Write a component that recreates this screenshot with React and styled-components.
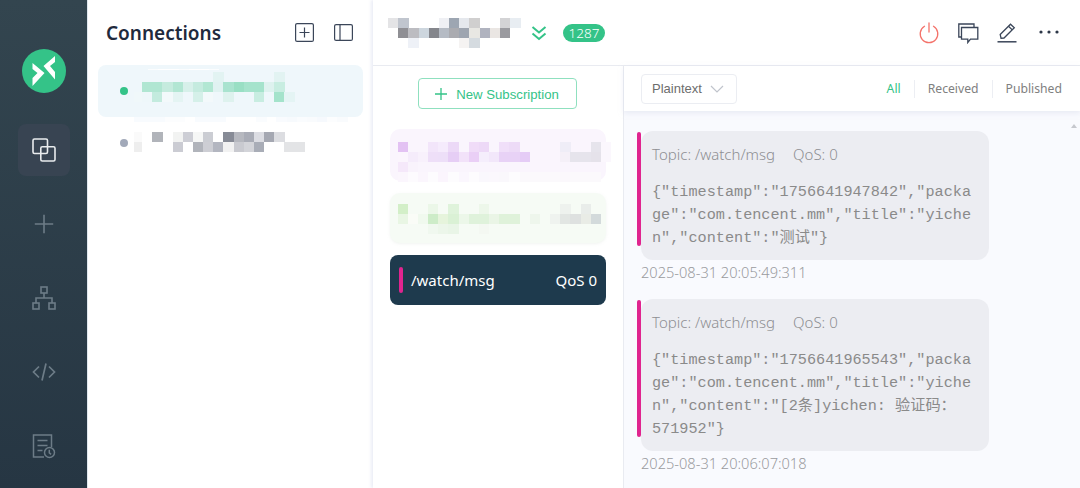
import React from "react";
import styled, { createGlobalStyle } from "styled-components";

const GREEN = "#34c388";
const PINK = "#e0248f";
const CELL = 10.17;

const Global = createGlobalStyle`
  html, body { margin: 0; padding: 0; width: 1080px; height: 488px; overflow: hidden; background: #fff; }
  * { box-sizing: border-box; }
  body { font-family: "Noto Sans", "Noto Sans CJK SC", sans-serif; }
`;

const Shell = styled.div`
  display: flex;
  width: 1080px;
  height: 488px;
  overflow: hidden;
`;

const Rail = styled.nav`
  width: 88px;
  flex: none;
  display: flex;
  flex-direction: column;
  align-items: center;
  padding: 49px 0 0 1px;
  background: linear-gradient(180deg, #33454f 0%, #263643 100%);
  border-right: 1px solid #dfe7ee;
`;

const Logo = styled.svg`
  display: block;
  flex: none;
  width: 44px;
  height: 44px;
  margin-bottom: 31px;
`;

const RailItem = styled.div`
  width: 52px;
  height: 52px;
  flex: none;
  display: flex;
  align-items: center;
  justify-content: center;
  margin-bottom: 22px;
  border-radius: 8px;
  background: ${(p) => (p.$active ? "#384452" : "transparent")};
  color: ${(p) => (p.$active ? "#e9ecee" : "#6d7c87")};
`;

const ListPanel = styled.aside`
  width: 285px;
  flex: none;
  padding: 0 10px 0 10px;
  background: #fff;
`;

const ListHeader = styled.header`
  height: 65px;
  display: flex;
  align-items: center;
  padding: 0 10px 0 8px;
`;

const ListTitle = styled.h1`
  margin: 0;
  flex: 1;
  font-size: 19px;
  font-weight: 600;
  color: #1f2a3d;
`;

const ListTools = styled.div`
  display: flex;
  align-items: center;
  gap: 20px;
  color: #3b4659;
`;

const ConnRow = styled.div`
  height: 52px;
  display: flex;
  align-items: center;
  padding-left: 22px;
  border-radius: 8px;
  background: ${(p) => (p.$active ? "#eff7fb" : "transparent")};
`;

const Dot = styled.span`
  width: 8px;
  height: 8px;
  flex: none;
  border-radius: 50%;
  background: ${(p) => (p.$on ? GREEN : "#a2a9b9")};
`;

const MosaicSvg = styled.svg`
  display: block;
  flex: none;
  overflow: visible;
  shape-rendering: crispEdges;
  margin-left: ${(p) => p.$ml || 0}px;
`;

const Main = styled.main`
  flex: 1;
  min-width: 0;
  display: flex;
  flex-direction: column;
  box-shadow: -2px 0 3px rgba(210, 216, 235, 0.45);
  position: relative;
`;

const TopBar = styled.header`
  height: 66px;
  flex: none;
  display: flex;
  align-items: center;
  padding: 0 19px 0 15px;
  border-bottom: 1px solid #e9ebf1;
  background: #fff;
`;

const DoubleChevron = styled.svg`
  display: block;
  margin-left: 13px;
  color: ${GREEN};
`;

const Badge = styled.span`
  margin-left: 16px;
  width: 42px;
  height: 18px;
  border-radius: 9px;
  background: ${GREEN};
  color: #fff;
  font-size: 13.5px;
  font-weight: 300;
  line-height: 18px;
  text-align: center;
`;

const TopTools = styled.div`
  margin-left: auto;
  display: flex;
  align-items: center;
  gap: 17px;
  color: #3b4659;
`;

const Body = styled.div`
  flex: 1;
  min-height: 0;
  display: flex;
`;

const SubsColumn = styled.section`
  width: 251px;
  flex: none;
  display: flex;
  flex-direction: column;
  padding: 12px 17px 0 17px;
  border-right: 1px solid #e9ebf1;
  background: #fff;
`;

const NewSub = styled.button`
  align-self: center;
  width: 159px;
  height: 31px;
  flex: none;
  display: flex;
  align-items: center;
  justify-content: center;
  gap: 9px;
  margin: 0 0 20px -2px;
  padding: 1px 0 0;
  border: 1px solid #8fe0bf;
  border-radius: 4px;
  background: #fff;
  color: ${GREEN};
  font-family: "Liberation Sans", sans-serif;
  font-size: 13.2px;
`;

const SubCard = styled.div`
  width: 216px;
  height: ${(p) => (p.$h ? p.$h : 50)}px;
  flex: none;
  display: flex;
  align-items: center;
  margin-bottom: 12px;
  padding: 0 9px;
  border-radius: ${(p) => (p.$dark ? 8 : 10)}px;
  background: ${(p) => p.$bg};
  color: #fff;
  font-size: 15px;
  box-shadow: ${(p) => (p.$shadow ? "0 1px 3px rgba(200,210,200,.25)" : "none")};
`;

const SubBar = styled.span`
  width: 4px;
  height: 26px;
  flex: none;
  margin-right: 8px;
  border-radius: 2px;
  background: ${PINK};
`;

const SubName = styled.span`
  flex: 1;
`;

const MessagesColumn = styled.section`
  flex: 1;
  min-width: 0;
  display: flex;
  flex-direction: column;
  background: #f9fafe;
  position: relative;
`;

const MsgToolbar = styled.div`
  height: 45px;
  flex: none;
  display: flex;
  align-items: center;
  padding: 0 18px 0 17px;
  background: #fff;
  box-shadow: 0 2px 5px rgba(215, 220, 235, 0.5);
`;

const Select = styled.div`
  width: 96px;
  height: 30px;
  display: flex;
  align-items: center;
  justify-content: space-between;
  padding: 0 12px 0 10px;
  border: 1px solid #ebedf2;
  border-radius: 4px;
  color: #6d6d6d;
  font-family: "Liberation Sans", sans-serif;
  font-size: 13px;
`;

const Tabs = styled.div`
  margin-left: auto;
  display: flex;
  align-items: center;
`;

const Tab = styled.span`
  font-size: 12.2px;
  line-height: 18px;
  color: ${(p) => (p.$active ? GREEN : "#808080")};
  padding-left: ${(p) => (p.$first ? 0 : 13)}px;
  margin-left: ${(p) => (p.$first ? 0 : 13)}px;
  border-left: ${(p) => (p.$first ? "none" : "1px solid #eceef3")};
`;

const ScrollArrow = styled.span`
  position: absolute;
  right: 3px;
  top: 58px;
  border-left: 3px solid transparent;
  border-right: 3px solid transparent;
  border-bottom: 4px solid #c6c8ce;
`;

const MsgList = styled.div`
  flex: 1;
  min-height: 0;
  padding: 20px 17px 0 17px;
  display: flex;
  flex-direction: column;
`;

const Message = styled.article`
  flex: none;
  margin-bottom: 16px;
`;

const Bubble = styled.div`
  position: relative;
  width: 348px;
  padding: 12px 11px 10px 11px;
  border-radius: 12px;
  background: #ecedf2;
  &::before {
    content: "";
    position: absolute;
    left: -4px;
    top: 1px;
    bottom: 14px;
    width: 4px;
    border-radius: 2px;
    background: ${PINK};
  }
`;

const Meta = styled.div`
  display: flex;
  gap: 18px;
  height: 22px;
  font-size: 15px;
  font-weight: 300;
  line-height: 22px;
  color: #8e8f93;
`;

const Payload = styled.pre`
  margin: 16px 0 0;
  font-family: "Liberation Mono", "Noto Sans CJK SC", monospace;
  font-size: 15.2px;
  line-height: 23px;
  color: #8a8a8a;
  white-space: pre-wrap;
  word-break: break-all;
`;

const Time = styled.div`
  margin-top: 1px;
  height: 22px;
  font-size: 14.6px;
  font-weight: 300;
  line-height: 22px;
  color: #9a9b9f;
`;

function Mosaic({ width, height, ml, rows }) {
  return (
    <MosaicSvg width={width} height={height} viewBox={`0 0 ${width} ${height}`} $ml={ml}>
      {rows.flatMap((r, ri) =>
        r.cells.map((c, i) =>
          c ? <rect key={`${ri}-${i}`} x={r.x + i * CELL} y={r.y} width={r.w || CELL + 0.3} height={r.h || 10} fill={c} /> : null
        )
      )}
    </MosaicSvg>
  );
}

const _ = null;

const conn1 = [
  { x: 14, y: 4, h: 1, cells: ["#fbfdfe", "#ffffff", "#ffffff", "#fbfdfe", "#ffffff", "#ffffff", "#fbfdfe"] },
  { x: 8, y: 7, cells: [_, _, _, _, _, _, _, "#e2f3f2", _, _, _, _, _, "#e2f3f2"] },
  { x: 8, y: 17, cells: ["#b0e6d2", "#b0e6d2", "#c5ebde", "#b2e6d3", "#d7f0ea", "#c5ebdf", "#b2e7d3", "#e0f2f1", "#a9e3cf", "#99dfc4", "#a5e3cc", "#a5e3cc", "#def2ef", "#c8ede1"] },
  { x: 0, y: 27, w: 8, cells: ["#f0f8fa"] },
  { x: 8, y: 27, cells: ["#eef7fa", "#c3ebde", "#f3f9fb", "#e4f4f3", _, "#d5f0e9", "#f3f9fb", _, "#def2ee", _, _, "#c8ede1", _, "#a4e3cb", "#e4f4f4"] },
  { x: 0, y: 52, h: 5, cells: ["#f8fbfe", "#f8fbfe", "#f8fbfe", "#fcfdfe", "#fcfdfe", _, "#f8fbfe", "#f8fbfe", "#f8fbfe", _, _, _, "#fafcfe", _, "#f9fbfe", "#f7fafd", "#fafcfe", "#f9fbfd", "#f6f9fd", "#fcfdfe", "#f9fbfd"] },
];

const conn2 = [
  { x: 0, y: 15, w: 8, cells: ["#fafafa"] },
  { x: 8, y: 15, cells: [_, "#b1b4ba", _, "#f2f3f2", "#cdced5", "#f6f7f6", "#cbcdd3", _, "#878b96", "#b6b8bf", "#a9acb6", "#dcdde3", "#a5a8b2", "#dcdde1"] },
  { x: 0, y: 25, w: 8, cells: ["#eeeeee"] },
  { x: 8, y: 25, cells: [_, _, _, "#cbccd3", _, "#b1b4bb", "#cdced4", "#b3b6c0", "#f2f2f2", "#c9cad0", "#d3d4d9", "#a9adb7", _, _, "#e3e4e6", "#e3e4e6"] },
];

const title = [
  { x: 0, y: 0, cells: ["#e4e4e6", "#c0c5ce", _, _, _, "#eff0f4", "#9da6b2", "#e5e8ed", "#d0cfcf", _, _, "#d3d3d5", "#e8edf2"] },
  { x: 0, y: 10, cells: [_, "#8f8f94", "#bcbcc1", "#cdd6de", "#84868c", "#b5bbc4", "#aaabb0", "#9ea5b0", "#e8e7e3", "#b0b3bf", "#eae6e3", "#9a9a9f"] },
  { x: 0, y: 20, cells: [_, _, "#eef1f7", _, _, _, _, "#f5f3f2", "#d5dbe0"] },
];

const sub1 = [
  { x: -1.5, y: 13, cells: ["#e3c2f3", _, _, "#f2e5fa", "#f5ebfc", "#ecd9f7", _, "#f0dcf8", "#edd9f7", _, "#f0dff9", "#eddbf7", _, _, _, _, "#efedf7", _, _, "#e6e4ec", "#fbf7fd"] },
  { x: -1.5, y: 23, cells: ["#fbf5fd", "#f5ecfb", "#f8f1fc", "#eedff8", "#eddff8", "#e6cef5", "#f2e2f9", "#eacff6", "#f5eefc", "#f2e7fa", "#e8d2f6", "#e8d2f6", "#e5ccf6", _, _, _, "#f5f0f8", "#e6e4ec", "#e6e4ec", "#e5e2ea", "#fbf7fd"] },
  { x: -1.5, y: 33, cells: ["#f5e8fa", "#f9f3fc"] },
  { x: -1.5, y: 43, cells: ["#fbf6fd", "#fdfbfe", "#fbf6fd", "#fdfcfe", "#fbf5fd", "#fdfcfe", "#fbf7fe", "#fdfcfe", "#faf8fd", "#fbf8fd", "#faf8fc", "#fdfcfe", "#fbf9fc", "#fbf9fc", "#fbf9fc", "#fbf9fc", "#fbf8fc", "#fbf9fc", "#fbf9fc", "#fbf9fc"] },
];

const sub2 = [
  { x: -1.5, y: 11, cells: ["#d3efc8", _, _, "#ebf7e8", _, "#dff3db", _, _, "#edf7ea", _, _, _, _, _, _, _, "#eef2ee", _, "#e9edea"] },
  { x: -1.5, y: 21, cells: ["#e9f6e4", "#fafcf7", "#f0f9ee", "#cdecc8", "#e6f4dc", "#daf1d5", "#ecf7e9", "#dff2db", "#dff2db", "#eaf5e6", "#dff2da", "#dff2da", _, "#eef6ec", _, "#eff3ef", "#e2e6e3", "#dee1e0", "#e9ece6", "#d3dadb"] },
  { x: -1.5, y: 31, cells: [_, _, _, "#f0f8ef", "#ecf6ea", "#e9f5e7", _, _, "#f4f8f2"] },
];

const RailCopy = () => (
  <svg width="24" height="24" viewBox="0 0 24 24" fill="none" stroke="currentColor" strokeWidth="1.6">
    <rect x="1" y="1" width="14.5" height="14.5" rx="1.5" />
    <rect x="8.8" y="8.8" width="14.2" height="14.2" rx="1.5" />
  </svg>
);
const RailPlus = () => (
  <svg width="20" height="20" viewBox="0 0 20 20" fill="none" stroke="currentColor" strokeWidth="1.6">
    <path d="M10 .8v18.4M.8 10h18.4" />
  </svg>
);
const RailTree = () => (
  <svg width="24" height="24" viewBox="0 0 24 24" fill="none" stroke="currentColor" strokeWidth="1.6">
    <rect x="9" y="1" width="6" height="6" />
    <rect x="1" y="17" width="6" height="6" />
    <rect x="17" y="17" width="6" height="6" />
    <path d="M12 7v5M4 17v-5h16v5" />
  </svg>
);
const RailCode = () => (
  <svg width="24" height="20" viewBox="0 0 24 20" fill="none" stroke="currentColor" strokeWidth="1.7">
    <path d="M7 4.5 1.5 10 7 15.5M17 4.5l5.500 5.500-5.500 5.500M14 1.500 10 18.500" />
  </svg>
);
const RailLog = () => (
  <svg width="24" height="25" viewBox="0 0 24 25" fill="none" stroke="currentColor" strokeWidth="1.5">
    <path d="M12 23H1.500V1H19.500V13" />
    <path d="M5.500 6.500h10M5.500 11.500h10M5.500 16.500h5" />
    <circle cx="17.500" cy="18.500" r="5" />
    <path d="M17.300 15.800v3l1.800 1.500" />
  </svg>
);

export default function App() {
  return (
    <Shell>
      <Global />
      <Rail>
        <Logo viewBox="0 0 44 44">
          <circle cx="22" cy="22" r="22" fill={GREEN} />
          <path fill="#fff" d="M33 7 21.500 17 33 30.500V23L28 17 33 13ZM10.500 14 22.500 24 10.500 37V29L15.500 24 10.500 20Z" />
        </Logo>
        <RailItem $active><RailCopy /></RailItem>
        <RailItem><RailPlus /></RailItem>
        <RailItem><RailTree /></RailItem>
        <RailItem><RailCode /></RailItem>
        <RailItem><RailLog /></RailItem>
      </Rail>
      <ListPanel>
        <ListHeader>
          <ListTitle>Connections</ListTitle>
          <ListTools>
            <svg width="19" height="19" viewBox="0 0 19 19" fill="none" stroke="currentColor" strokeWidth="1.2">
              <rect x=".6" y=".6" width="17.800" height="17.800" rx="1.500" />
              <path d="M9.500 4.500v10M4.500 9.500h10" />
            </svg>
            <svg width="19" height="17" viewBox="0 0 19 17" fill="none" stroke="currentColor" strokeWidth="1.2">
              <rect x=".6" y=".6" width="17.800" height="15.800" rx="1.500" />
              <path d="M6 .6v15.800" />
            </svg>
          </ListTools>
        </ListHeader>
        <ConnRow $active>
          <Dot $on />
          <Mosaic width={170} height={52} ml={6} rows={conn1} />
        </ConnRow>
        <ConnRow>
          <Dot />
          <Mosaic width={170} height={52} ml={6} rows={conn2} />
        </ConnRow>
      </ListPanel>
      <Main>
        <TopBar>
          <Mosaic width={130} height={30} rows={title} />
          <DoubleChevron width="16" height="16" viewBox="0 0 16 16" fill="none" stroke="currentColor" strokeWidth="2">
            <path d="M1.500 2 8 7.500 14.500 2M1.500 8.500 8 14 14.500 8.500" />
          </DoubleChevron>
          <Badge>1287</Badge>
          <TopTools>
            <svg width="22" height="22" viewBox="0 0 22 22" fill="none" stroke="#f4736b" strokeWidth="1.3" strokeLinecap="round">
              <path d="M6.500 4.300A8.800 8.800 0 1 0 15.500 4.300M11 1v9" />
            </svg>
            <svg width="22" height="22" viewBox="0 0 22 22" fill="none" stroke="currentColor" strokeWidth="1.3">
              <path d="M4.500 15H1.800V2H17V5.500" />
              <path d="M4.500 5.500H20.800V17.200H13.500L10.800 20.500V17.200H4.500Z" />
            </svg>
            <svg width="22" height="22" viewBox="0 0 22 22" fill="none" stroke="currentColor" strokeWidth="1.300">
              <path d="M5 16.200 4.200 12.500 14.500 2.200 18.300 5.800 8 16Z" />
              <path d="M12.500 4.200 16.300 7.900" />
              <path d="M1.500 19.800H20.500" strokeWidth="1.500" />
            </svg>
            <svg width="26" height="22" viewBox="0 0 26 22" fill="#2d3748">
              <circle cx="6" cy="10" r="1.600" />
              <circle cx="14" cy="10" r="1.600" />
              <circle cx="22" cy="10" r="1.600" />
            </svg>
          </TopTools>
        </TopBar>
        <Body>
          <SubsColumn>
            <NewSub>
              <svg width="12" height="12" viewBox="0 0 12 12" fill="none" stroke="currentColor" strokeWidth="1.300">
                <path d="M6 0v12M0 6h12" />
              </svg>
              New Subscription
            </NewSub>
            <SubCard $bg="#faf5fd" $h={52}>
              <Mosaic width={198} height={52} rows={sub1} />
            </SubCard>
            <SubCard $bg="#f6fbf5" $shadow>
              <Mosaic width={198} height={50} rows={sub2} />
            </SubCard>
            <SubCard $bg="#1e3a4d" $dark>
              <SubBar />
              <SubName>/watch/msg</SubName>
              QoS 0
            </SubCard>
          </SubsColumn>
          <MessagesColumn>
            <MsgToolbar>
              <Select>
                Plaintext
                <svg width="14" height="8" viewBox="0 0 14 8" fill="none" stroke="#c0c4cc" strokeWidth="1.200">
                  <path d="M1 1l6 6 6-6" />
                </svg>
              </Select>
              <Tabs>
                <Tab $active $first>All</Tab>
                <Tab>Received</Tab>
                <Tab>Published</Tab>
              </Tabs>
            </MsgToolbar>
            <ScrollArrow />
            <MsgList>
              <Message>
                <Bubble>
                  <Meta><span>Topic: /watch/msg</span><span>QoS: 0</span></Meta>
                  <Payload>{'{"timestamp":"1756641947842","package":"com.tencent.mm","title":"yichen","content":"测试"}'}</Payload>
                </Bubble>
                <Time>2025-08-31 20:05:49:311</Time>
              </Message>
              <Message>
                <Bubble>
                  <Meta><span>Topic: /watch/msg</span><span>QoS: 0</span></Meta>
                  <Payload>{'{"timestamp":"1756641965543","package":"com.tencent.mm","title":"yichen","content":"[2条]yichen: 验证码：\n571952"}'}</Payload>
                </Bubble>
                <Time>2025-08-31 20:06:07:018</Time>
              </Message>
            </MsgList>
          </MessagesColumn>
        </Body>
      </Main>
    </Shell>
  );
}
